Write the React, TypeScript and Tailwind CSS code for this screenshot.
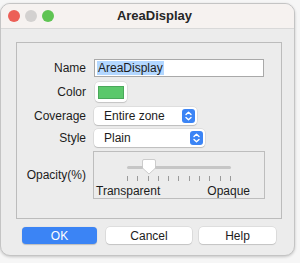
import React from "react";

function Stepper() {
  return (
    <div className="w-[13px] h-[14px] rounded-[3px] bg-[#3b84f5] flex items-center justify-center">
      <svg width="7" height="10" viewBox="0 0 7 10" fill="none" stroke="white" strokeWidth="1.4" strokeLinecap="round" strokeLinejoin="round">
        <path d="M1 3.6 L3.5 1.2 L6 3.6" />
        <path d="M1 6.4 L3.5 8.8 L6 6.4" />
      </svg>
    </div>
  );
}

function Popup({ text, width }: { text: string; width: string }) {
  return (
    <div className={`${width} h-[18px] bg-white rounded-[4px] shadow-[0_0_0_0.5px_rgba(0,0,0,0.12),0_1px_1px_rgba(0,0,0,0.15)] flex items-center justify-between pl-[10px] pr-[2px]`}>
      <span>{text}</span>
      <Stepper />
    </div>
  );
}

export default function App() {
  const ticks = Array.from({ length: 11 }, (_, i) => i);
  return (
    <div
      className="w-[300px] h-[263px] bg-[#f6f6f6] pt-[3px] text-[12px] text-[#1c1c1c]"
      style={{ fontFamily: '"Liberation Sans", Arial, sans-serif' }}
    >
      <div className="w-[295px] h-[253px] rounded-[10px] border border-[#c4c4c4] bg-[#ececec] overflow-hidden shadow-[0_1px_3px_rgba(0,0,0,0.2)] flex flex-col">
        {/* Title bar */}
        <div className="h-[25px] bg-[#f6f2f0] border-b border-[#d9d9d9] grid grid-cols-[1fr_auto_1fr] items-center">
          <div className="flex items-center gap-[5px] pl-[7px]">
            <div className="w-[12px] h-[12px] rounded-full bg-[#ec5f57]" />
            <div className="w-[12px] h-[12px] rounded-full bg-[#d3d1d0]" />
            <div className="w-[12px] h-[12px] rounded-full bg-[#5fc453]" />
          </div>
          <div className="font-bold text-[13px] text-[#262626] pl-[14px]">AreaDisplay</div>
          <div />
        </div>

        {/* Inner box */}
        <div className="mt-[13px] ml-[15px] w-[266px] h-[177px] border border-[#bcbcbc] flex flex-col pt-[16px]">
          {/* Name */}
          <div className="flex items-center h-[18px]">
            <div className="w-[69px] text-right">Name</div>
            <div className="ml-[8px] w-[170px] h-[18px] bg-white border border-[#a9a9a9] flex items-center pl-[2px]">
              <span className="bg-[#b3d7ff] px-[1px] leading-[14px]">AreaDisplay</span>
            </div>
          </div>
          {/* Color */}
          <div className="flex items-center h-[20px] mt-[5px]">
            <div className="w-[69px] text-right">Color</div>
            <div className="ml-[9px] w-[32px] h-[20px] bg-white rounded-[4px] shadow-[0_0_0_0.5px_rgba(0,0,0,0.12),0_1px_1px_rgba(0,0,0,0.12)] flex items-center justify-center">
              <div className="w-[26px] h-[13px] bg-[#5bc86b] border border-[#4aa85a]" />
            </div>
          </div>
          {/* Coverage */}
          <div className="flex items-center h-[18px] mt-[5px]">
            <div className="w-[69px] text-right">Coverage</div>
            <div className="ml-[8px]">
              <Popup text="Entire zone" width="w-[103px]" />
            </div>
          </div>
          {/* Style */}
          <div className="flex items-center h-[18px] mt-[4px]">
            <div className="w-[69px] text-right">Style</div>
            <div className="ml-[8px]">
              <Popup text="Plain" width="w-[111px]" />
            </div>
          </div>
          {/* Opacity */}
          <div className="flex items-center h-[48px] mt-[4px]">
            <div className="w-[69px] text-right">Opacity(%)</div>
            <div className="ml-[7px] w-[172px] h-[48px] border border-[#bdbdbd] flex flex-col items-stretch pt-[7px]">
              <div className="relative mx-auto w-[104px] h-[16px] flex items-center">
                <div className="w-full h-[3px] rounded-full bg-[#c6c6c6]" />
                <svg className="absolute left-[15px] top-0" width="14" height="16" viewBox="0 0 14 16">
                  <path d="M2 0.5 H12 A1.5 1.5 0 0 1 13.5 2 V9 L7 15 L0.5 9 V2 A1.5 1.5 0 0 1 2 0.5 Z" fill="white" stroke="#c2c2c2" strokeWidth="0.8" />
                </svg>
              </div>
              <div className="mx-auto w-[104px] h-[6px] mt-[1px] flex justify-between">
                {ticks.map((i) => (
                  <div key={i} className="w-[1px] h-[5px] bg-[#9a9a9a]" />
                ))}
              </div>
              <div className="flex justify-between px-[2px] mt-[2px] leading-[14px]">
                <span>Transparent</span>
                <span className="mr-[12px]">Opaque</span>
              </div>
            </div>
          </div>
        </div>

        {/* Buttons */}
        <div className="flex mt-[8px] ml-[21px] h-[17px]">
          <div className="w-[75px] h-[17px] rounded-[4px] bg-[#3b84f5] text-white flex items-center justify-center shadow-[0_0.5px_1px_rgba(0,0,0,0.2)]">
            OK
          </div>
          <div className="ml-[9px] w-[86px] h-[17px] rounded-[4px] bg-white flex items-center justify-center shadow-[0_0_0_0.5px_rgba(0,0,0,0.12),0_1px_1px_rgba(0,0,0,0.12)]">
            Cancel
          </div>
          <div className="ml-[7px] w-[77px] h-[17px] rounded-[4px] bg-white flex items-center justify-center shadow-[0_0_0_0.5px_rgba(0,0,0,0.12),0_1px_1px_rgba(0,0,0,0.12)]">
            Help
          </div>
        </div>
      </div>
    </div>
  );
}
